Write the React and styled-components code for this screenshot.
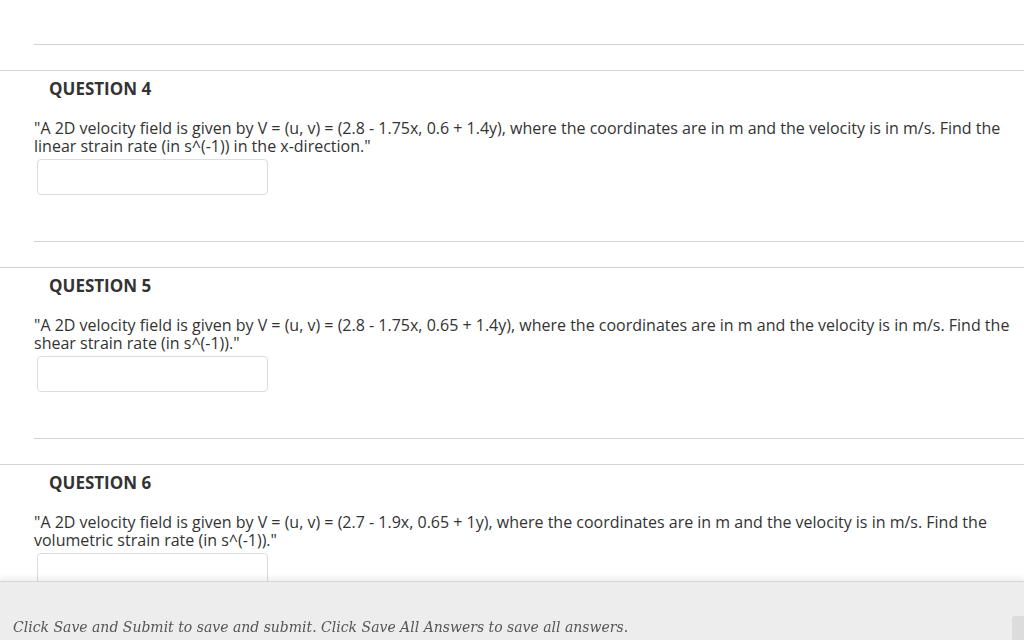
import styled, { createGlobalStyle } from "styled-components";

const Global = createGlobalStyle`
body {
  margin: 0;
  background: #fff;
  font-family: "Open Sans", "Liberation Sans", sans-serif;
  color: #333;
}
`;

const Page = styled.div`
padding-top: 44px;
padding-bottom: 80px;
`;

const Separator = styled.div`
margin-left: 34px;
border-top: 1px solid #d4d4d4;
height: 0;
`;

const QuestionBlock = styled.section`
margin-top: 25px;
border-top: 1px solid #d4d4d4;
`;

const QuestionBody = styled.div`
padding: 8px 0 46px 34px;
`;

const Heading = styled.h3`
margin: 0 0 0 15px;
font-size: 17px;
line-height: 20px;
font-weight: 700;
color: #333;
`;

const Prompt = styled.p`
margin: 20px 0 4px;
font-size: 16px;
line-height: 18px;
color: #333;
padding-right: 10px;
`;

const AnswerInput = styled.input`
display: block;
margin-left: 3px;
width: 231px;
height: 36px;
box-sizing: border-box;
border: 1px solid #dcdcdc;
border-radius: 4px;
background: #fff;
`;

const BottomBar = styled.footer`
position: fixed;
left: 0;
right: 0;
bottom: 0;
height: 59px;
background: #ededed;
border-top: 1px solid #d6d6d6;
box-shadow: 0 -4px 5px rgba(0, 0, 0, 0.06);
display: flex;
align-items: flex-end;
padding: 0 13px 3px;
box-sizing: border-box;
`;

const Hint = styled.span`
font-family: "DejaVu Serif", "Liberation Serif", serif;
font-style: italic;
font-size: 14px;
line-height: 20px;
color: #555;
`;

const Tab = styled.div`
position: absolute;
right: 0;
bottom: 0;
width: 12px;
height: 24px;
background: #dcdcdc;
border-top-left-radius: 3px;
`;

const questions = [
  {
    n: 4,
    text: '"A 2D velocity field is given by V = (u, v) = (2.8 - 1.75x, 0.6 + 1.4y), where the coordinates are in m and the velocity is in m/s. Find the linear strain rate (in s^(-1)) in the x-direction."',
  },
  {
    n: 5,
    text: '"A 2D velocity field is given by V = (u, v) = (2.8 - 1.75x, 0.65 + 1.4y), where the coordinates are in m and the velocity is in m/s. Find the shear strain rate (in s^(-1))."',
  },
  {
    n: 6,
    text: '"A 2D velocity field is given by V = (u, v) = (2.7 - 1.9x, 0.65 + 1y), where the coordinates are in m and the velocity is in m/s. Find the volumetric strain rate (in s^(-1))."',
  },
];

export default function App() {
  return (
    <>
      <Global />
      <Page>
        <Separator />
        {questions.map((q) => (
          <QuestionBlock key={q.n}>
            <QuestionBody>
              <Heading>QUESTION {q.n}</Heading>
              <Prompt>{q.text}</Prompt>
              <AnswerInput type="text" />
            </QuestionBody>
            <Separator />
          </QuestionBlock>
        ))}
      </Page>
      <BottomBar>
        <Hint>Click Save and Submit to save and submit. Click Save All Answers to save all answers.</Hint>
        <Tab />
      </BottomBar>
    </>
  );
}
